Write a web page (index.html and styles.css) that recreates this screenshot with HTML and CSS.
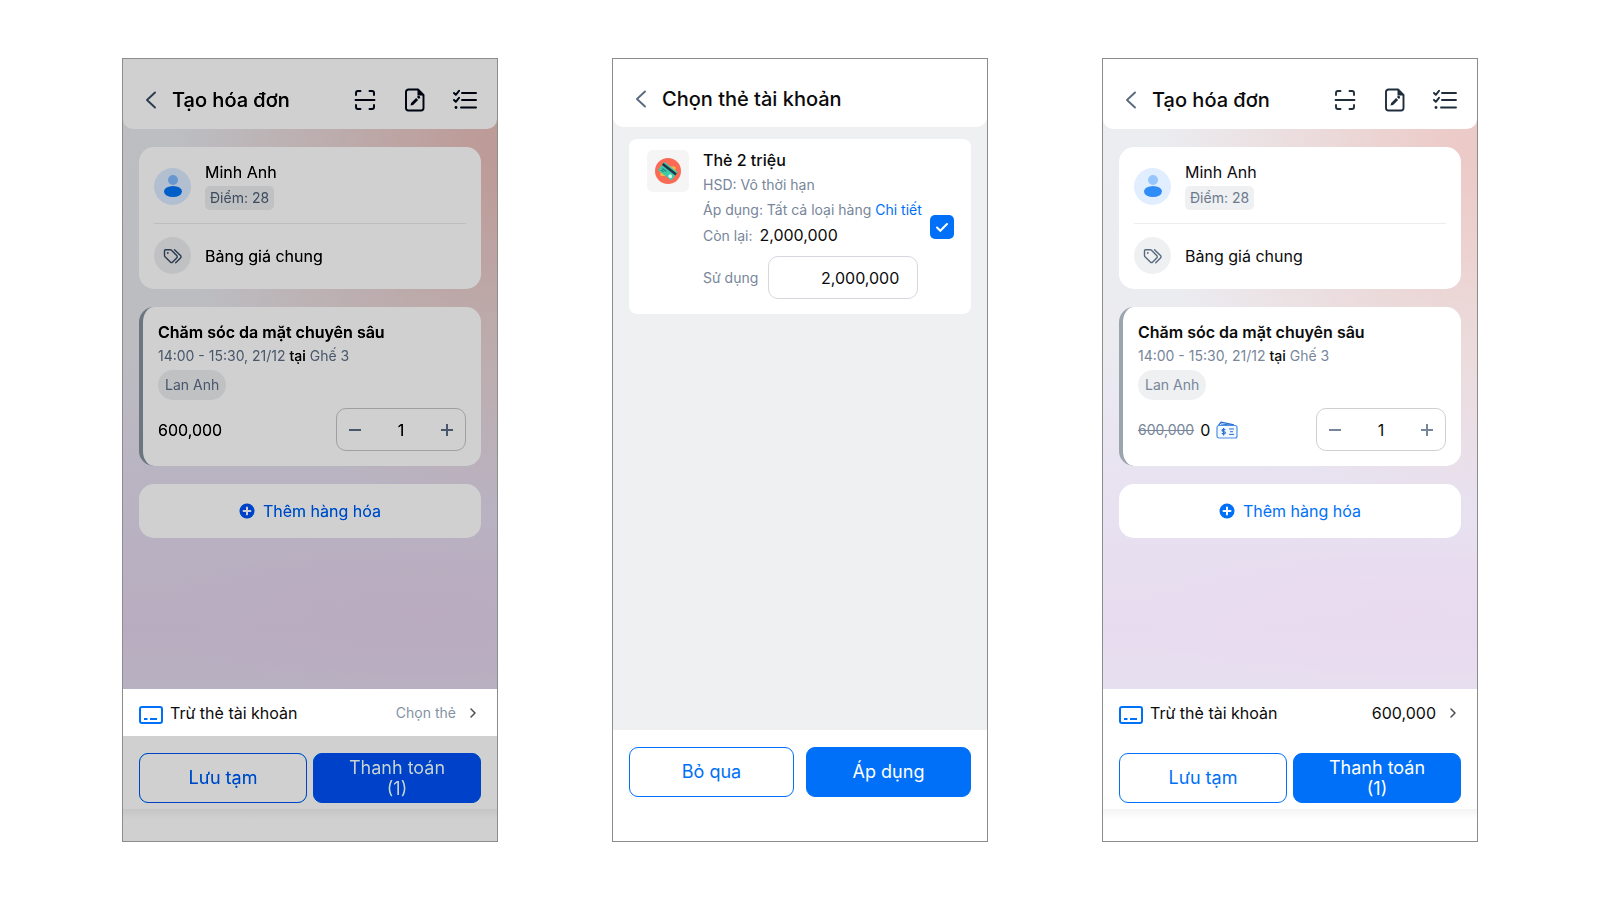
FILE: index.html
```html
<!DOCTYPE html>
<html lang="vi">
<head>
  <meta charset="UTF-8">
  <meta name="viewport" content="width=device-width, initial-scale=1.0">
  <title>Tạo hóa đơn</title>
  <link rel="stylesheet" href="styles.css">
</head>
<body>

  <!-- shared icons -->
  <svg class="sprite" aria-hidden="true">
    <symbol id="back" viewBox="0 0 12 18">
      <path d="M10 1.500L2 9l8 7.500" fill="none" stroke="currentColor" stroke-width="1.900" stroke-linecap="round" stroke-linejoin="round"/>
    </symbol>
    <symbol id="scan" viewBox="0 0 24 24">
      <path d="M3 7V5a2 2 0 0 1 2-2h2.500M16.500 3H19a2 2 0 0 1 2 2v2M21 17v2a2 2 0 0 1-2 2h-2.500M7.500 21H5a2 2 0 0 1-2-2v-2M2.500 12h19" fill="none" stroke="currentColor" stroke-width="1.900" stroke-linecap="round"/>
    </symbol>
    <symbol id="draft" viewBox="0 0 24 24">
      <path d="M5.500 1.500h9.500l5.500 5.500v13a2.500 2.500 0 0 1-2.500 2.500H5.500A2.500 2.500 0 0 1 3 20V4a2.500 2.500 0 0 1 2.500-2.500z" fill="none" stroke="currentColor" stroke-width="1.900" stroke-linejoin="round"/>
      <path d="M14.500 1.500V7.500h6z" fill="currentColor"/>
      <path d="M7.500 17.500l.6-2.600 5-5 2 2-5 5zM13.900 9.100l.8-.8a1.400 1.400 0 0 1 2 2l-.8.8z" fill="currentColor"/>
    </symbol>
    <symbol id="checklist" viewBox="0 0 24 24">
      <path d="M9 5h14M9 12h14M8 19.500h15" fill="none" stroke="currentColor" stroke-width="1.900" stroke-linecap="round"/>
      <path d="M1 5l1.800 1.800L6 2.800M1 12l1.800 1.800L6 9.800" fill="none" stroke="currentColor" stroke-width="1.900" stroke-linecap="round" stroke-linejoin="round"/>
      <circle cx="3" cy="19.500" r="1.400" fill="currentColor"/>
    </symbol>
    <symbol id="tags" viewBox="0 0 20 16">
      <path d="M1.500 2.700v4.800c0 .5.200.9.500 1.200l5.300 5.300c.7.700 1.700.7 2.400 0l4-4c.7-.7.700-1.700 0-2.400L8.500 2.200c-.3-.3-.7-.5-1.200-.5H2.500c-.6 0-1 .4-1 1zM11.500 1.700l6 5.900c.7.700.7 1.700 0 2.400l-4.800 4.800" fill="none" stroke="currentColor" stroke-width="1.400" stroke-linecap="round" stroke-linejoin="round"/>
      <circle cx="4.800" cy="5" r="0.900" fill="currentColor"/>
    </symbol>
    <symbol id="add" viewBox="0 0 16 16">
      <circle cx="8" cy="8" r="7.500" fill="currentColor"/>
      <path d="M8 4.500v7M4.500 8h7" stroke="#fff" stroke-width="2" stroke-linecap="round"/>
    </symbol>
    <symbol id="card" viewBox="0 0 24 18">
      <rect x="1" y="1" width="22" height="16" rx="2" fill="none" stroke="currentColor" stroke-width="2"/>
      <path d="M5 13h3.500M11 13h7" stroke="currentColor" stroke-width="2"/>
    </symbol>
    <symbol id="next" viewBox="0 0 8 12">
      <path d="M2 2l4 4-4 4" fill="none" stroke="currentColor" stroke-width="1.500" stroke-linecap="round" stroke-linejoin="round"/>
    </symbol>
  </svg>

  <main class="screens">

    <section class="phone dimmed">
      <header class="topbar">
        <button type="button" class="icon-btn" aria-label="Quay lại"><svg class="ic-back"><use href="#back"/></svg></button>
        <h1>Tạo hóa đơn</h1>
        <nav class="tools">
          <button type="button" class="icon-btn" aria-label="Quét mã"><svg class="ic-tool"><use href="#scan"/></svg></button>
          <button type="button" class="icon-btn" aria-label="Ghi chú"><svg class="ic-tool"><use href="#draft"/></svg></button>
          <button type="button" class="icon-btn" aria-label="Danh sách"><svg class="ic-tool"><use href="#checklist"/></svg></button>
        </nav>
      </header>

      <div class="content">
        <div class="panel customer">
          <div class="line">
            <span class="avatar"><i class="head"></i><i class="body"></i></span>
            <div>
              <div class="name">Minh Anh</div>
              <span class="points">Điểm: 28</span>
            </div>
          </div>
          <div class="line price-list">
            <span class="avatar gray"><svg class="ic-tags"><use href="#tags"/></svg></span>
            <div class="name">Bảng giá chung</div>
          </div>
        </div>

        <div class="panel service">
          <h2>Chăm sóc da mặt chuyên sâu</h2>
          <p class="time">14:00 - 15:30, 21/12 <b>tại</b> Ghế 3</p>
          <span class="staff">Lan Anh</span>
          <div class="amount">
            <span class="price">600,000</span>
            <div class="stepper">
              <button type="button" class="minus" aria-label="Giảm"></button>
              <input type="text" value="1" aria-label="Số lượng">
              <button type="button" class="plus" aria-label="Tăng"></button>
            </div>
          </div>
        </div>

        <button type="button" class="panel add"><svg class="ic-add"><use href="#add"/></svg>Thêm hàng hóa</button>
      </div>

      <footer class="bottom">
        <a class="deduct" href="#">
          <svg class="ic-card"><use href="#card"/></svg>
          <span>Trừ thẻ tài khoản</span>
          <span class="value hint">Chọn thẻ</span>
          <svg class="ic-next"><use href="#next"/></svg>
        </a>
        <div class="actions">
          <button type="button" class="btn">Lưu tạm</button>
          <button type="button" class="btn primary">Thanh toán<br>(1)</button>
        </div>
        <div class="home"></div>
      </footer>
    </section>

    <section class="phone picker">
      <header class="topbar">
        <button type="button" class="icon-btn" aria-label="Quay lại"><svg class="ic-back"><use href="#back"/></svg></button>
        <h1>Chọn thẻ tài khoản</h1>
      </header>

      <div class="content">
        <div class="panel card-item">
          <span class="thumb">
            <svg viewBox="0 0 28 28">
              <circle cx="14" cy="14" r="13" fill="#fa6a55"/>
              <rect x="6.500" y="9.500" width="15" height="9.500" rx="1" fill="#f5b945"/>
              <g transform="rotate(38 14 14)">
                <rect x="5.500" y="9" width="17" height="10.500" rx="1" fill="#3fc9ab"/>
                <rect x="5.500" y="10.500" width="17" height="2.500" fill="#22364a"/>
                <path d="M8 15.500h5M8 17.500h3" stroke="#17836d"/>
                <circle cx="19" cy="16.800" r="1.900" fill="#d9f5ee"/>
              </g>
            </svg>
          </span>
          <div class="info">
            <h2>Thẻ 2 triệu</h2>
            <p>HSD: Vô thời hạn</p>
            <p>Áp dụng: Tất cả loại hàng <a href="#">Chi tiết</a></p>
            <p>Còn lại: <span class="left">2,000,000</span></p>
            <div class="use">
              <label for="use">Sử dụng</label>
              <input type="text" id="use" value="2,000,000">
            </div>
          </div>
          <input type="checkbox" class="check" aria-label="Thẻ 2 triệu" checked>
        </div>
      </div>

      <footer class="bottom">
        <div class="actions">
          <button type="button" class="btn">Bỏ qua</button>
          <button type="button" class="btn primary">Áp dụng</button>
        </div>
      </footer>
    </section>

    <section class="phone">
      <header class="topbar">
        <button type="button" class="icon-btn" aria-label="Quay lại"><svg class="ic-back"><use href="#back"/></svg></button>
        <h1>Tạo hóa đơn</h1>
        <nav class="tools">
          <button type="button" class="icon-btn" aria-label="Quét mã"><svg class="ic-tool"><use href="#scan"/></svg></button>
          <button type="button" class="icon-btn" aria-label="Ghi chú"><svg class="ic-tool"><use href="#draft"/></svg></button>
          <button type="button" class="icon-btn" aria-label="Danh sách"><svg class="ic-tool"><use href="#checklist"/></svg></button>
        </nav>
      </header>

      <div class="content">
        <div class="panel customer">
          <div class="line">
            <span class="avatar"><i class="head"></i><i class="body"></i></span>
            <div>
              <div class="name">Minh Anh</div>
              <span class="points">Điểm: 28</span>
            </div>
          </div>
          <div class="line price-list">
            <span class="avatar gray"><svg class="ic-tags"><use href="#tags"/></svg></span>
            <div class="name">Bảng giá chung</div>
          </div>
        </div>

        <div class="panel service">
          <h2>Chăm sóc da mặt chuyên sâu</h2>
          <p class="time">14:00 - 15:30, 21/12 <b>tại</b> Ghế 3</p>
          <span class="staff">Lan Anh</span>
          <div class="amount">
            <del>600,000</del>
            <span class="price">0</span>
            <svg class="ic-wallet" viewBox="0 0 22 18">
              <path d="M2.500 4.500L5 1.200l13 2.600" fill="none" stroke="#2a6fd0" stroke-width="1.300" stroke-linejoin="round"/>
              <path d="M5 3l11 1.200" stroke="#2a6fd0"/>
              <rect x="1" y="4.500" width="20" height="12.500" rx="2" fill="#f3f8ff" stroke="#4b8fe6" stroke-width="1.200"/>
              <path d="M9.300 8.900c-.5-.7-3.300-.9-3.300.5s3.400.8 3.400 2.300-2.900 1.400-3.500.4M7.600 7v7.500" fill="none" stroke="#2a6fd0" stroke-width="1.200"/>
              <path d="M13 8h5M14 10.700h3M13 13.400h5" stroke="#2a6fd0"/>
            </svg>
            <div class="stepper">
              <button type="button" class="minus" aria-label="Giảm"></button>
              <input type="text" value="1" aria-label="Số lượng">
              <button type="button" class="plus" aria-label="Tăng"></button>
            </div>
          </div>
        </div>

        <button type="button" class="panel add"><svg class="ic-add"><use href="#add"/></svg>Thêm hàng hóa</button>
      </div>

      <footer class="bottom">
        <a class="deduct" href="#">
          <svg class="ic-card"><use href="#card"/></svg>
          <span>Trừ thẻ tài khoản</span>
          <span class="value">600,000</span>
          <svg class="ic-next"><use href="#next"/></svg>
        </a>
        <div class="actions">
          <button type="button" class="btn">Lưu tạm</button>
          <button type="button" class="btn primary">Thanh toán<br>(1)</button>
        </div>
        <div class="home"></div>
      </footer>
    </section>

  </main>

</body>
</html>
```
FILE: styles.css
```css
* {
  box-sizing: border-box;
}

body {
  margin: 0;
  background: #fff;
  color: #0b0b0c;
  font-family: Inter, "Noto Sans", sans-serif;
  font-size: 16px;
  line-height: 20px;
}

h1, h2, p {
  margin: 0;
}

button, input {
  font: inherit;
  color: inherit;
}

a {
  color: #0070f8;
  text-decoration: none;
}

.sprite {
  display: none;
}

.screens {
  display: grid;
  grid-template-columns: repeat(3, 1fr);
  gap: 114px;
  min-height: 100vh;
  padding: 58px 122px;
}

.phone {
  display: flex;
  flex-direction: column;
  border: 1px solid #8c8c8c;
  background: #e9e1f0;
}

/* header */
.topbar {
  display: flex;
  align-items: center;
  height: 70px;
  padding: 12px 20px 0 22px;
  background: #fff;
  border-radius: 0 0 10px 10px;
  position: relative;
  z-index: 1;
}

.topbar h1 {
  margin-left: 15px;
  font-size: 20px;
  font-weight: 500;
  line-height: 24px;
}

.icon-btn {
  display: flex;
  padding: 0;
  border: none;
  background: none;
  color: #1f2d3d;
  cursor: pointer;
}

.topbar > .icon-btn {
  color: #5a6a7e;
}

.tools {
  display: flex;
  gap: 26px;
  margin-left: auto;
}

.ic-back { width: 12px; height: 18px; }
.ic-tool { width: 24px; height: 24px; }
.ic-tags { width: 20px; height: 16px; }
.ic-add { width: 16px; height: 16px; }
.ic-card { width: 24px; height: 18px; }
.ic-next { width: 8px; height: 12px; }
.ic-wallet { width: 22px; height: 18px; }

/* content */
.content {
  flex: 1;
  display: flex;
  flex-direction: column;
  gap: 18px;
  margin-top: -10px;
  padding: 28px 16px 16px;
  background:
    radial-gradient(ellipse 70% 15% at 80% 87%, #e9daef, transparent),
    radial-gradient(ellipse 85% 65% at 100% 5%, #eccac7 5%, rgba(236, 208, 206, 0) 100%),
    linear-gradient(#ebedf1 0, #ebebf0 40%, #e8e2f1 65%, #e7dcef 90%, #e7e0f0);
}

.panel {
  border: none;
  border-radius: 15px;
  background: #fff;
}

.customer {
  padding: 0 15px;
}

.line {
  display: flex;
  align-items: center;
  gap: 14px;
  height: 76px;
  padding-top: 2px;
}

.price-list {
  height: 66px;
  padding: 0 0 2px;
  border-top: 1px solid #ededf0;
}

.avatar {
  display: flex;
  flex-direction: column;
  align-items: center;
  justify-content: center;
  gap: 1px;
  width: 37px;
  height: 37px;
  border-radius: 50%;
  background: #e1eeff;
}

.avatar.gray {
  background: #eff0f2;
  color: #5a6a7e;
}

.head {
  width: 10px;
  height: 10px;
  border-radius: 50%;
  background: #96c6fd;
}

.body {
  width: 18px;
  height: 11px;
  border-radius: 50%;
  background: #2f8df8;
}

.points {
  display: inline-block;
  margin-top: 4px;
  padding: 2px 5px;
  border-radius: 5px;
  background: #eff0f2;
  color: #6b7a8d;
  font-size: 14px;
}

.service {
  padding: 15px;
  border-left: 4px solid #9aa5b0;
}

h2 {
  font-size: 16px;
  font-weight: 600;
}

.time {
  margin-top: 4px;
  color: #77869a;
  font-size: 14px;
}

.time b {
  color: #0b0b0c;
  font-weight: 500;
}

.staff {
  display: inline-block;
  margin-top: 4px;
  padding: 5px 7px;
  border-radius: 15px;
  background: #eff0f2;
  color: #77869a;
  font-size: 14px;
}

.amount {
  display: flex;
  align-items: center;
  gap: 6px;
  margin-top: 8px;
}

.amount del {
  color: #77869a;
  font-size: 14px;
}

.stepper {
  display: flex;
  align-items: center;
  justify-content: space-between;
  width: 130px;
  height: 43px;
  margin-left: auto;
  padding: 0 12px;
  border: 1px solid #cfcfd2;
  border-radius: 10px;
}

.stepper input {
  width: 40px;
  padding: 0;
  border: none;
  background: none;
  text-align: center;
}

.stepper button {
  width: 12px;
  height: 12px;
  padding: 0;
  border: none;
  background: linear-gradient(#77869a, #77869a) center / 12px 2px no-repeat;
}

.stepper .plus {
  background:
    linear-gradient(#77869a, #77869a) center / 12px 2px no-repeat,
    linear-gradient(#77869a, #77869a) center / 2px 12px no-repeat;
}

.add {
  display: flex;
  align-items: center;
  justify-content: center;
  gap: 8px;
  height: 54px;
  color: #0070f8;
}

/* footer */
.deduct {
  display: flex;
  align-items: center;
  height: 47px;
  padding: 0 20px 0 16px;
  background: #fff;
  color: #0b0b0c;
}

.deduct .ic-card {
  margin-top: 4px;
  margin-right: 7px;
  color: #0070f8;
}

.deduct .ic-next {
  margin-left: 13px;
  color: #4a4f55;
}

.value {
  margin-left: auto;
}

.hint {
  color: #8592a3;
  font-size: 14px;
}

.actions {
  display: flex;
  gap: 6px;
  padding: 17px 16px 6px;
  background: #fff;
}

.btn {
  flex: 1;
  height: 50px;
  padding: 0 0 1px;
  border: 1px solid #0070f8;
  border-radius: 9px;
  background: #fff;
  color: #0070f8;
  font-size: 18px;
  line-height: 21px;
}

.btn.primary {
  background: #0070f8;
  color: #fff;
}

.home {
  height: 32px;
  background: linear-gradient(#f4f4f4, #fff 10px);
}

/* first screen: everything but the card row is darkened */
.dimmed .topbar,
.dimmed .content,
.dimmed .actions,
.dimmed .home {
  filter: brightness(0.731) contrast(1.368);
}

/* card picker */
.picker {
  background: #eff0f2;
}

.picker .topbar {
  height: 68px;
}

.picker .content {
  padding-top: 22px;
  background: #eff0f2;
}

.card-item {
  display: flex;
  align-items: center;
  padding: 11px 17px 15px 18px;
  border-radius: 8px;
}

.thumb {
  display: flex;
  align-items: center;
  justify-content: center;
  align-self: flex-start;
  width: 42px;
  height: 42px;
  border-radius: 6px;
  background: #f5f5f5;
}

.thumb svg {
  width: 28px;
  height: 28px;
}

.info {
  flex: 1;
  margin-left: 14px;
  color: #77869a;
  font-size: 14px;
}

.info h2 {
  color: #0b0b0c;
  font-weight: 500;
}

.info p {
  margin-top: 5px;
}

.left {
  margin-left: 3px;
  color: #0b0b0c;
  font-size: 16px;
}

.use {
  display: flex;
  align-items: center;
  gap: 10px;
  margin-top: 10px;
}

.use input {
  width: 150px;
  height: 43px;
  padding: 0 18px;
  border: 1px solid #d5d9df;
  border-radius: 10px;
  color: #0b0b0c;
  font-size: 16px;
  text-align: right;
}

.check {
  appearance: none;
  width: 24px;
  height: 24px;
  margin: 4px 0 0;
  border-radius: 5px;
  background: #0070f8 url("data:image/svg+xml,%3Csvg xmlns='http://www.w3.org/2000/svg' viewBox='0 0 24 24'%3E%3Cpath d='M7 12.500l3.300 3.300L17 9' fill='none' stroke='white' stroke-width='2' stroke-linecap='round'/%3E%3C/svg%3E");
}

.picker .actions {
  gap: 12px;
  padding: 17px 16px 44px;
}
```
